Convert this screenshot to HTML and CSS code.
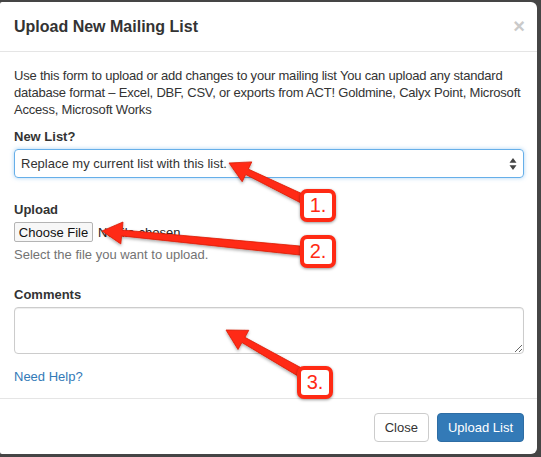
FILE: index.html
```html
<!DOCTYPE html>
<html>
<head>
<meta charset="utf-8">
<link rel="stylesheet" href="styles.css">
</head>
<body>
<div class="modal">
  <div class="modal-header">
    <h4 class="modal-title">Upload New Mailing List</h4>
    <span class="close">×</span>
  </div>
  <div class="modal-body">
    <p class="intro">Use this form to upload or add changes to your mailing list You can upload any standard database format – Excel, DBF, CSV, or exports from ACT! Goldmine, Calyx Point, Microsoft Access, Microsoft Works</p>
    <label class="lbl lbl-first">New List?</label>
    <div class="select">
      <span>Replace my current list with this list.</span>
      <svg class="caret" width="8" height="12" viewBox="0 0 8 12"><path d="M4 0 L7.5 4.8 L0.5 4.8 Z M4 12 L7.5 7.2 L0.5 7.2 Z" fill="#444"/></svg>
    </div>
    <label class="lbl">Upload</label>
    <div class="file-row"><span class="file-btn">Choose File</span><span class="file-name">No file chosen</span></div>
    <p class="help">Select the file you want to upload.</p>
    <label class="lbl">Comments</label>
    <textarea class="comments"></textarea>
    <a class="help-link">Need Help?</a>
  </div>
  <div class="modal-footer">
    <button class="btn btn-default">Close</button>
    <button class="btn btn-primary">Upload List</button>
  </div>
</div>

<svg class="arrows" width="541" height="457" viewBox="0 0 541 457">
  <defs>
    <filter id="sh" x="-20%" y="-20%" width="140%" height="140%">
      <feDropShadow dx="0" dy="1.5" stdDeviation="1.5" flood-color="#000" flood-opacity="0.35"/>
    </filter>
  </defs>
  <g fill="#ff2a14" stroke="#d81c06" stroke-width="0.8" stroke-linejoin="round" filter="url(#sh)">
    <polygon points="229,163 251.8,161.9 248.3,169.1 307,196 303,204 245.7,174.5 242.2,181.7"/>
    <polygon points="102,231 123,222 122.2,230 305.4,246.5 304.6,255.5 121.6,235.9 120.8,243.9"/>
    <polygon points="226,330 248.8,330.3 244.9,337.3 307.2,371.1 302.8,378.9 241.9,342.5 238,349.5"/>
  </g>
</svg>
<div class="badge badge-1">1.</div>
<div class="badge badge-2">2.</div>
<div class="badge badge-3">3.</div>
</body>
</html>
```

FILE: styles.css
```css
html, body {
  margin: 0;
  padding: 0;
}
body {
  background: #454545;
  font-family: "Liberation Sans", Arial, sans-serif;
  font-size: 13px;
  color: #333;
  width: 541px;
  height: 457px;
  overflow: hidden;
  position: relative;
}
.modal {
  margin-top: 2px;
  width: 537px;
  background: #fff;
  border-radius: 2px 6px 6px 2px;
}
.modal-header {
  display: flex;
  align-items: center;
  justify-content: space-between;
  padding: 14px 12px 14px 14px;
  border-bottom: 1px solid #e5e5e5;
}
.modal-title {
  margin: 0;
  font-size: 16px;
  line-height: 21px;
  font-weight: bold;
  color: #333;
}
.close {
  font-size: 20px;
  font-weight: bold;
  line-height: 21px;
  color: #cacaca;
}
.modal-body {
  padding: 15px 13px 13px 14px;
  display: flex;
  flex-direction: column;
  align-items: flex-start;
}
.intro {
  margin: 0;
  line-height: 17px;
  letter-spacing: -0.2px;
}
.lbl {
  display: block;
  font-weight: bold;
  line-height: 17px;
  margin-top: 23px;
  margin-bottom: 4px;
}
.lbl-first {
  margin-top: 10px;
}
.select {
  box-sizing: border-box;
  width: 100%;
  height: 29px;
  border: 1px solid #66afe9;
  border-radius: 4px;
  box-shadow: 0 0 4px rgba(102, 175, 233, 0.55);
  padding: 0 6px;
  display: flex;
  align-items: center;
  justify-content: space-between;
  color: #333;
}
.caret {
  display: block;
}
.file-row {
  display: flex;
  align-items: center;
  height: 20px;
}
.file-btn {
  box-sizing: border-box;
  height: 20px;
  width: 79px;
  border: 1px solid #b4b4b4;
  border-radius: 2px;
  background: #f7f7f7;
  color: #111;
  display: flex;
  align-items: center;
  justify-content: center;
}
.file-name {
  margin-left: 5px;
  color: #222;
}
.help {
  margin: 4px 0 0;
  line-height: 17px;
  color: #737373;
}
.comments {
  display: block;
  box-sizing: border-box;
  width: 100%;
  height: 47px;
  margin: 0;
  border: 1px solid #ccc;
  border-radius: 4px;
  box-shadow: inset 0 1px 1px rgba(0, 0, 0, 0.075);
  resize: vertical;
  font-family: inherit;
  font-size: 13px;
}
.help-link {
  margin-top: 14px;
  line-height: 17px;
  color: #337ab7;
}
.modal-footer {
  border-top: 1px solid #e5e5e5;
  padding: 14px 13px 12px 14px;
  display: flex;
  justify-content: flex-end;
  gap: 8px;
}
.btn {
  box-sizing: border-box;
  height: 29px;
  padding: 0 10px;
  border-radius: 4px;
  font-family: inherit;
  font-size: 13px;
  line-height: 27px;
  margin: 0;
}
.btn-default {
  background: #fff;
  border: 1px solid #ccc;
  color: #333;
}
.btn-primary {
  background: #337ab7;
  border: 1px solid #2e6da4;
  color: #fff;
}
.arrows {
  position: absolute;
  left: 0;
  top: 0;
  pointer-events: none;
}
.badge {
  position: absolute;
  box-sizing: border-box;
  width: 36px;
  height: 33px;
  border: 4px solid #ff2a14;
  border-radius: 7px;
  background: #fff;
  color: #ff2a14;
  font-size: 20px;
  line-height: 25px;
  text-align: center;
  box-shadow: 0 1px 3px rgba(0, 0, 0, 0.4);
}
.badge-1 { left: 300px; top: 189px; }
.badge-2 { left: 300px; top: 235px; }
.badge-3 { left: 297px; top: 366px; }
```
